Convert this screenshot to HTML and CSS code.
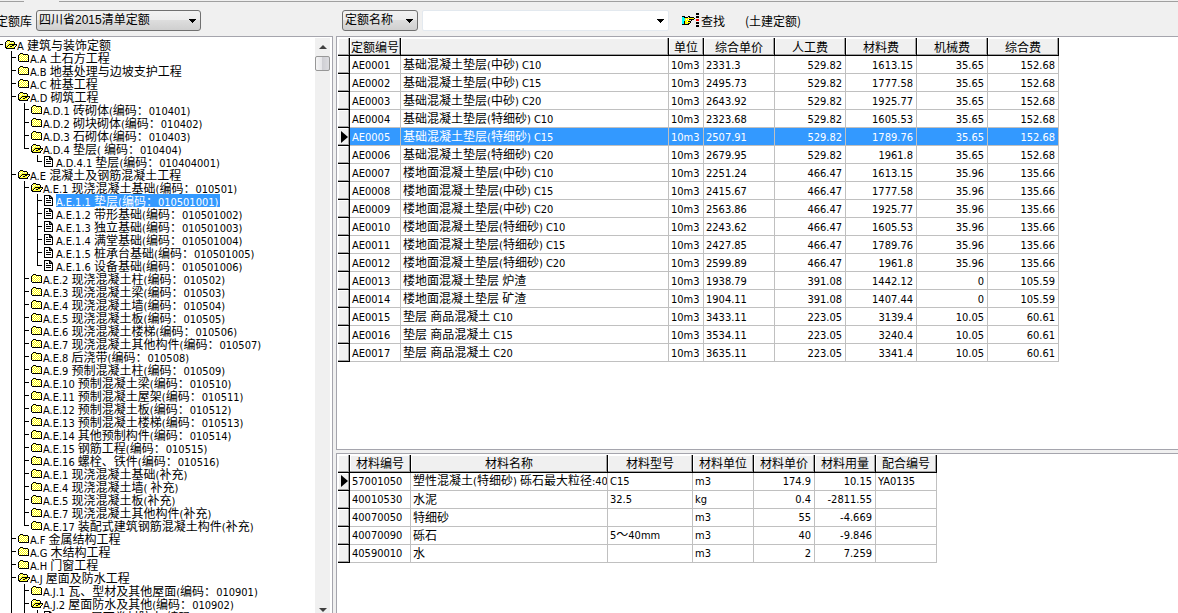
FILE: index.html
```
<!DOCTYPE html>
<html lang="zh-CN">
<head>
<meta charset="utf-8">
<title>定额查询</title>
<link rel="stylesheet" href="styles.css">
</head>
<body>
<svg class="defs" aria-hidden="true">
  <defs>
    <pattern id="dither" width="2" height="2" patternUnits="userSpaceOnUse">
      <rect width="2" height="2" fill="#ffff00"/><rect x="1" width="1" height="1" fill="#ffffff"/><rect y="1" width="1" height="1" fill="#ffffff"/>
    </pattern>
    <symbol id="folder" viewBox="0 0 12 11">
      <path d="M1 3h9v6H1zM2 2h3v1H2z" fill="url(#dither)"/>
      <path d="M2 1h3v1H2zM1 2h1v1H1zM5 2h5v1H5zM0 3h1v6H0zM10 3h1v6h-1zM1 9h10v1H1z" fill="#000"/>
    </symbol>
    <symbol id="folder-open" viewBox="0 0 12 11">
      <path d="M1 2h8v7H1zM3 6h8l-2 3H1z" fill="#ffff33"/>
      <path d="M1 3h1v1H1zM3 3h1v1H3zM5 3h1v1H5zM7 3h1v1H7zM2 4h1v1H2zM1 5h1v1H1zM3 7h1v1H3zM9 7h1v1H9z" fill="#fff"/>
      <path d="M2 1h3v1H2zM1 2h1v1H1zM5 2h4v1H5zM0 3h1v6H0zM9 3h1v2H9zM4 5h8v1H4zM3 6h1v1H3zM2 7h1v1H2zM1 8h1v1H1zM11 6h1v1h-1zM10 7h1v1h-1zM9 8h1v1H9zM1 9h9v1H1zM5 7h2v1H5zM7 6h2v1H7z" fill="#000"/>
    </symbol>
    <symbol id="page" viewBox="0 0 12 11">
      <path d="M0 0h6l3 3v8H0z" fill="#000"/>
      <path d="M1 1h4v3h3v6H1zM6 2l1 1H6z" fill="#fff"/>
      <path d="M2 3h2v1H2zM2 5h5v1H2zM2 7h5v1H2z" fill="#000"/>
    </symbol>
  </defs>
</svg>
<div class="tabs"><span class="tab-left"></span><span class="tab-right"></span></div>
<header class="toolbar">
  <div class="group library">
    <label for="library">定额库</label>
    <select id="library" class="combo combo-library"><option>四川省2015清单定额</option></select>
  </div>
  <div class="group search">
    <select class="combo combo-field" aria-label="查询字段"><option>定额名称</option></select>
    <select class="combo combo-text" aria-label="查询内容"><option></option></select>
    <button class="find" type="button">
      <svg width="17" height="14" viewBox="0 0 17 14" aria-hidden="true">
        <path d="M0 4h3v7H0z" fill="#00ffff"/><path d="M3 5h5v6H3zM7 5h5v1H7z" fill="#ffff00"/>
        <path d="M4 6h1v1H4zM6 6h1v1H6zM5 8h1v1H5z" fill="#fff"/>
        <path d="M0 3h3v1H0zM2 4h1v1H2zM3 4h3v1H3zM6 3h2v1H6zM7 4h5v1H7zM12 5h1v1h-1zM7 6h5v1H7zM9 7h1v1H9zM6 8h3v1H6zM8 9h1v1H8zM6 10h2v1H6zM3 11h4v1H3zM0 11h3v1H0zM2 8h1v3H2zM14 0h3v2h-3zM14 3h3v2h-3zM14 9h3v2h-3zM14 12h3v2h-3z" fill="#000"/>
        <path d="M14 6h3v2h-3z" fill="#ff0000"/>
      </svg>
      <span>查找</span>
    </button>
    <span class="kind">(土建定额)</span>
  </div>
</header>
<main class="workspace">
  <nav class="panel tree-panel" aria-label="定额目录">
    <div class="tree" id="tree"></div>
    <div class="scrollbar" aria-hidden="true"><span class="arrow up"></span><span class="thumb"></span><span class="arrow down"></span></div>
  </nav>
  <div class="grids">
    <section class="panel quota-panel"><table class="grid quota" id="quota"></table></section>
    <section class="panel material-panel"><table class="grid material" id="material"></table></section>
  </div>
</main>
<script src="app.js"></script>
</body>
</html>
```
FILE: styles.css
```
* { box-sizing: border-box; }
html, body { height: 100%; }
body {
  margin: 0;
  display: flex;
  flex-direction: column;
  overflow: hidden;
  background: #f0f0f0;
  color: #000;
  font: 12px/13px "Noto Sans CJK SC", sans-serif;
}
.latin { font-family: "DejaVu Sans Condensed", "DejaVu Sans", sans-serif; font-size: 11px; }
.defs { position: absolute; width: 0; height: 0; }

.tabs { display: flex; justify-content: space-between; gap: 35px; height: 2px; flex: none; }
.tab-left { width: 24px; border-bottom: 1px solid #a0a0a0; }
.tab-right { flex: 1; border-bottom: 1px solid #a0a0a0; }

.toolbar { display: flex; flex: none; height: 34px; align-items: center; padding-top: 2px; }
.group { display: flex; align-items: center; }
.library { width: 342px; margin-left: -4px; gap: 4px; }
.search { margin-left: 4px; gap: 4px; }
.combo {
  appearance: none;
  height: 21px;
  margin: 0;
  padding: 0 16px 0 2px;
  border: 1px solid #707070;
  border-radius: 3px;
  color: #000;
  font: 12px/18px "Liberation Sans", "Noto Sans CJK SC", sans-serif;
  background:
    linear-gradient(#000, #000) right 4px top 8px / 7px 1px no-repeat,
    linear-gradient(#000, #000) right 5px top 9px / 5px 1px no-repeat,
    linear-gradient(#000, #000) right 6px top 10px / 3px 1px no-repeat,
    linear-gradient(#000, #000) right 7px top 11px / 1px 1px no-repeat,
    linear-gradient(#f2f2f2, #ebebeb 50%, #dddddd 50%, #cfcfcf);
}
.combo-library { width: 165px; }
.combo-field { width: 76px; }
.combo-text {
  width: 247px;
  border-color: #e3e9ef;
  border-radius: 2px;
  background:
    linear-gradient(#000, #000) right 4px top 8px / 7px 1px no-repeat,
    linear-gradient(#000, #000) right 5px top 9px / 5px 1px no-repeat,
    linear-gradient(#000, #000) right 6px top 10px / 3px 1px no-repeat,
    linear-gradient(#000, #000) right 7px top 11px / 1px 1px no-repeat,
    #fff;
}
.find { display: flex; align-items: center; gap: 2px; margin-left: 9px; padding: 0; border: 0; background: none; color: #000; font: inherit; }
.kind { margin-left: 16px; }

.workspace { display: flex; flex: 1; min-height: 0; gap: 3px; }
.panel { border: 1px solid #a5a5ad; background: #fff; overflow: hidden; }
.tree-panel { display: flex; width: 333px; flex: none; border-left: 0; border-bottom: 0; }
.tree { flex: 1; min-width: 0; padding-top: 1px; overflow: hidden; }
.row { display: flex; height: 13px; align-items: center; white-space: pre; }
.row .icon { width: 12px; height: 11px; flex: none; }
.row .name { height: 13px; line-height: 13px; padding-right: 2px; }
.row.selected .name { background: #3399ff; color: #fff; }
.guide { width: 13px; height: 13px; flex: none; background-repeat: no-repeat; }
.guide.edge { width: 5px; }
.guide.root { background-image: linear-gradient(#000, #000); background-size: 3px 1px; background-position: 0 6px; }
.guide.line { background-image: linear-gradient(#000, #000); background-size: 1px 13px; background-position: 6px 0; }
.guide.tee { background-image: linear-gradient(#000, #000), linear-gradient(#000, #000); background-size: 1px 13px, 5px 1px; background-position: 6px 0, 6px 6px; }
.guide.elbow { background-image: linear-gradient(#000, #000), linear-gradient(#000, #000); background-size: 1px 7px, 5px 1px; background-position: 6px 0, 6px 6px; }

.scrollbar { display: flex; flex-direction: column; align-items: center; width: 15px; margin: 1px 2px 0 0; flex: none; background: #f0f0f0; }
.arrow { width: 0; height: 0; border: 4px solid transparent; }
.up { border-top: 0; border-bottom-color: #404040; margin-top: 7px; }
.down { border-bottom: 0; border-top-color: #404040; margin: auto 0 1px; }
.thumb { width: 15px; height: 15px; margin-top: 7px; border: 1px solid #979797; border-radius: 2px; background: linear-gradient(90deg, #f5f5f5, #e4e4e8 50%, #cfcfd4 50%, #dcdce0); }

.grids { display: flex; flex: 1; min-width: 0; flex-direction: column; gap: 3px; }
.quota-panel, .material-panel { border-right: 0; padding: 1px; }
.quota-panel { flex: 415 1 0; }
.material-panel { flex: 159 1 0; border-bottom: 0; }

.grid { border-collapse: separate; border-spacing: 0; table-layout: fixed; width: 0; }
.grid th, .grid td { height: 18px; padding: 0 3px 0 2px; white-space: nowrap; overflow: hidden; font-weight: normal; line-height: 14px; }
.grid th { padding: 0; text-align: center; background: #f0f0f0; border-right: 1px solid #000; border-bottom: 1px solid #000; box-shadow: inset -1px -1px #a0a0a0, inset 1px 1px #fff; }
.grid td { border-right: 1px solid #c0c0c0; border-bottom: 1px solid #c0c0c0; text-align: left; }
.grid td.num { text-align: right; }
.grid tr.selected td { background: #3399ff; color: #fff; }
.grid .mark { padding: 0 0 0 3px; }
.grid .mark svg { display: block; }
```
FILE: app.js
```
const tree = [
  [0, 'o', 'A 建筑与装饰定额'],
  [1, 'c', 'A.A 土石方工程'],
  [1, 'c', 'A.B 地基处理与边坡支护工程'],
  [1, 'c', 'A.C 桩基工程'],
  [1, 'o', 'A.D 砌筑工程'],
  [2, 'c', 'A.D.1 砖砌体(编码：010401)'],
  [2, 'c', 'A.D.2 砌块砌体(编码：010402)'],
  [2, 'c', 'A.D.3 石砌体(编码：010403)'],
  [2, 'o', 'A.D.4 垫层( 编码：010404)'],
  [3, 'p', 'A.D.4.1 垫层(编码：010404001)'],
  [1, 'o', 'A.E 混凝土及钢筋混凝土工程'],
  [2, 'o', 'A.E.1 现浇混凝土基础(编码：010501)'],
  [3, 'p', 'A.E.1.1 垫层(编码：010501001)', true],
  [3, 'p', 'A.E.1.2 带形基础(编码：010501002)'],
  [3, 'p', 'A.E.1.3 独立基础(编码：010501003)'],
  [3, 'p', 'A.E.1.4 满堂基础(编码：010501004)'],
  [3, 'p', 'A.E.1.5 桩承台基础(编码：010501005)'],
  [3, 'p', 'A.E.1.6 设备基础(编码：010501006)'],
  [2, 'c', 'A.E.2 现浇混凝土柱(编码：010502)'],
  [2, 'c', 'A.E.3 现浇混凝土梁(编码：010503)'],
  [2, 'c', 'A.E.4 现浇混凝土墙(编码：010504)'],
  [2, 'c', 'A.E.5 现浇混凝土板(编码：010505)'],
  [2, 'c', 'A.E.6 现浇混凝土楼梯(编码：010506)'],
  [2, 'c', 'A.E.7 现浇混凝土其他构件(编码：010507)'],
  [2, 'c', 'A.E.8 后浇带(编码：010508)'],
  [2, 'c', 'A.E.9 预制混凝土柱(编码：010509)'],
  [2, 'c', 'A.E.10 预制混凝土梁(编码：010510)'],
  [2, 'c', 'A.E.11 预制混凝土屋架(编码：010511)'],
  [2, 'c', 'A.E.12 预制混凝土板(编码：010512)'],
  [2, 'c', 'A.E.13 预制混凝土楼梯(编码：010513)'],
  [2, 'c', 'A.E.14 其他预制构件(编码：010514)'],
  [2, 'c', 'A.E.15 钢筋工程(编码：010515)'],
  [2, 'c', 'A.E.16 螺栓、铁件(编码：010516)'],
  [2, 'c', 'A.E.1 现浇混凝土基础(补充)'],
  [2, 'c', 'A.E.4 现浇混凝土墙( 补充)'],
  [2, 'c', 'A.E.5 现浇混凝土板(补充)'],
  [2, 'c', 'A.E.7 现浇混凝土其他构件(补充)'],
  [2, 'c', 'A.E.17 装配式建筑钢筋混凝土构件(补充)'],
  [1, 'c', 'A.F 金属结构工程'],
  [1, 'c', 'A.G 木结构工程'],
  [1, 'c', 'A.H 门窗工程'],
  [1, 'o', 'A.J 屋面及防水工程'],
  [2, 'c', 'A.J.1 瓦、型材及其他屋面(编码：010901)'],
  [2, 'o', 'A.J.2 屋面防水及其他(编码：010902)'],
  [3, 'p', 'A.J.2.1 屋面卷材防水(编码：010902001)'],
  [2, 'c', 'A.J.3 墙面防水、防潮(编码：010903)'],
  [1, 'c', 'A.K 保温、隔热、防腐工程'],
];

// Latin runs use a smaller face than the Chinese text.
const mix = s => s.replace(/[\x20-\x7e]+/g, run => `<span class="latin">${run}</span>`);

// True when a later row sits at this level before the branch closes.
const continues = (index, level) => {
  for (let i = index + 1; i < tree.length; i++) {
    if (tree[i][0] < level) return false;
    if (tree[i][0] === level) return true;
  }
  return false;
};

const icons = { o: 'folder-open', c: 'folder', p: 'page' };
document.getElementById('tree').innerHTML = tree.map(([level, icon, name, selected], i) => {
  let guides = `<span class="guide edge${level ? '' : ' root'}"></span>`;
  for (let l = 1; l <= level; l++) {
    const more = continues(i, l);
    const kind = l === level ? (more ? 'tee' : 'elbow') : (more ? 'line' : '');
    guides += `<span class="guide ${kind}"></span>`;
  }
  return `<div class="row${selected ? ' selected' : ''}">${guides}<svg class="icon"><use href="#${icons[icon]}"/></svg><span class="name">${mix(name)}</span></div>`;
}).join('');

const pointer = '<svg width="7" height="12" viewBox="0 0 7 12"><path d="M0 0l7 6-7 6z"/></svg>';
const renderGrid = (id, columns, rows, current, highlight) => {
  const cols = '<col style="width:12px">' + columns.map(c => `<col style="width:${c[1]}px">`).join('');
  const head = '<tr><th></th>' + columns.map(c => `<th>${c[0]}</th>`).join('') + '</tr>';
  const body = rows.map((r, i) =>
    `<tr${highlight && i === current ? ' class="selected"' : ''}><th class="mark">${i === current ? pointer : ''}</th>` +
    r.map((v, k) => `<td${columns[k][2] ? ' class="num"' : ''}>${mix(v)}</td>`).join('') + '</tr>').join('');
  document.getElementById(id).innerHTML = `<colgroup>${cols}</colgroup><thead>${head}</thead><tbody>${body}</tbody>`;
};

const quota = `基础混凝土垫层(中砂) C10|2331.3|529.82|1613.15|35.65|152.68
基础混凝土垫层(中砂) C15|2495.73|529.82|1777.58|35.65|152.68
基础混凝土垫层(中砂) C20|2643.92|529.82|1925.77|35.65|152.68
基础混凝土垫层(特细砂) C10|2323.68|529.82|1605.53|35.65|152.68
基础混凝土垫层(特细砂) C15|2507.91|529.82|1789.76|35.65|152.68
基础混凝土垫层(特细砂) C20|2679.95|529.82|1961.8|35.65|152.68
楼地面混凝土垫层(中砂) C10|2251.24|466.47|1613.15|35.96|135.66
楼地面混凝土垫层(中砂) C15|2415.67|466.47|1777.58|35.96|135.66
楼地面混凝土垫层(中砂) C20|2563.86|466.47|1925.77|35.96|135.66
楼地面混凝土垫层(特细砂) C10|2243.62|466.47|1605.53|35.96|135.66
楼地面混凝土垫层(特细砂) C15|2427.85|466.47|1789.76|35.96|135.66
楼地面混凝土垫层(特细砂) C20|2599.89|466.47|1961.8|35.96|135.66
楼地面混凝土垫层 炉渣|1938.79|391.08|1442.12|0|105.59
楼地面混凝土垫层 矿渣|1904.11|391.08|1407.44|0|105.59
垫层 商品混凝土 C10|3433.11|223.05|3139.4|10.05|60.61
垫层 商品混凝土 C15|3534.11|223.05|3240.4|10.05|60.61
垫层 商品混凝土 C20|3635.11|223.05|3341.4|10.05|60.61`.split('\n').map((line, i) => {
  const [name, ...prices] = line.split('|');
  return ['AE' + String(i + 1).padStart(4, '0'), name, '10m3', ...prices];
});
renderGrid('quota', [['定额编号', 51], ['', 268], ['单位', 35], ['综合单价', 71], ['人工费', 71, 1], ['材料费', 71, 1], ['机械费', 71, 1], ['综合费', 71, 1]], quota, 4, true);

renderGrid('material', [['材料编号', 61], ['材料名称', 197], ['材料型号', 85], ['材料单位', 61], ['材料单价', 61, 1], ['材料用量', 61, 1], ['配合编号', 61]], [
  ['57001050', '塑性混凝土(特细砂) 砾石最大粒径:40', 'C15', 'm3', '174.9', '10.15', 'YA0135'],
  ['40010530', '水泥', '32.5', 'kg', '0.4', '-2811.55', ''],
  ['40070050', '特细砂', '', 'm3', '55', '-4.669', ''],
  ['40070090', '砾石', '5～40mm', 'm3', '40', '-9.846', ''],
  ['40590010', '水', '', 'm3', '2', '7.259', ''],
], 0, false);
```
